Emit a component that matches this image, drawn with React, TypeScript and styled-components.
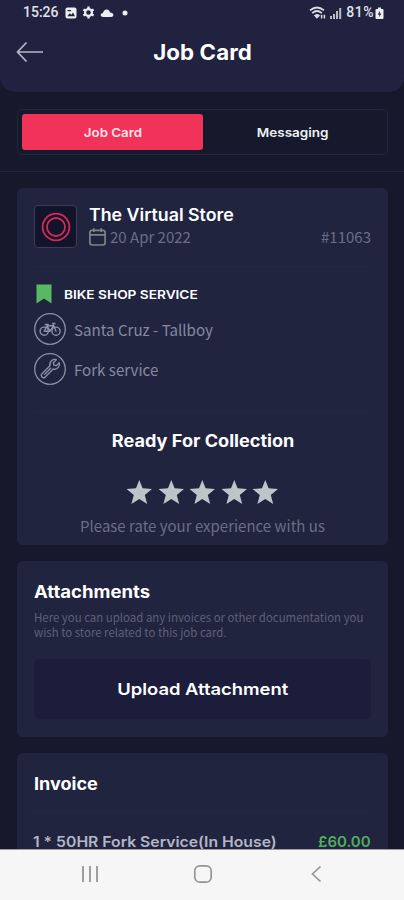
import React from "react";
import styled, { createGlobalStyle } from "styled-components";

const Global = createGlobalStyle`
  * { box-sizing: border-box; }
  html, body { margin: 0; padding: 0; overflow: hidden; background: #16192c; }
`;

const heading = `"Inter", "Liberation Sans", sans-serif`;
const body = `"Noto Sans CJK JP", "Noto Sans", sans-serif`;

const Screen = styled.div`
  width: 404px;
  height: 900px;
  display: flex;
  flex-direction: column;
  background: #16192c;
  overflow: hidden;
  font-family: ${body};
`;
const Header = styled.header`
  height: 92px;
  flex: none;
  background: #202240;
  border-radius: 0 0 15px 15px;
`;
const StatusBar = styled.div`
  height: 25px;
  display: flex;
  align-items: center;
  justify-content: space-between;
  padding: 0 20px 0 23px;
  font: 500 14px/25px Roboto, sans-serif;
  color: #e0e1ea;
`;
const StatusGroup = styled.div<{ $gap: number }>`
  display: flex;
  align-items: center;
  gap: ${(p) => p.$gap}px;
`;
const Clock = styled.span`
  width: 37px;
`;
const Battery = styled.span`
  display: flex;
  align-items: center;
  gap: 1px;
  margin-left: 1px;
  letter-spacing: 0.5px;
`;
const TitleBar = styled.div`
  height: 54px;
  display: grid;
  grid-template-columns: 60px 1fr 60px;
  align-items: center;
`;
const BackIcon = styled.svg`
  width: 28px;
  height: 22px;
  margin-left: 16px;
`;
const Label = styled.span<{
  $size: number;
  $track?: number;
  $color?: string;
  $weight?: number;
  $stretch?: number;
  $from?: "left" | "center" | "right";
}>`
  display: inline-block;
  font-family: ${heading};
  font-feature-settings: "calt" 0;
  font-size: ${(p) => p.$size}px;
  line-height: 1.2;
  font-weight: ${(p) => p.$weight ?? 700};
  letter-spacing: ${(p) => p.$track ?? 0}px;
  color: ${(p) => p.$color ?? "#ffffff"};
  white-space: nowrap;
  transform: scaleX(${(p) => p.$stretch ?? 1});
  transform-origin: ${(p) => p.$from ?? "left"} center;
`;
const Title = styled.h1`
  margin: 1px 0 0 2px;
  display: flex;
  justify-content: center;
  font-size: 20px;
`;
const TabSection = styled.div`
  flex: none;
  height: 80px;
  padding: 17px 16px 0 17px;
  border-bottom: 1px solid #20233a;
`;
const Tabs = styled.div`
  height: 46px;
  display: grid;
  grid-template-columns: 181px 1fr;
  padding: 4px;
  border: 1px solid #22263a;
  border-radius: 5px;
`;
const Tab = styled.button<{ $active?: boolean }>`
  border: 0;
  padding: 2px 0 0;
  border-radius: 3px;
  display: flex;
  align-items: center;
  justify-content: center;
  background: ${(p) => (p.$active ? "#f13259" : "transparent")};
`;
const Content = styled.main`
  flex: 1;
  min-height: 0;
  overflow: hidden;
  display: flex;
  flex-direction: column;
  gap: 16px;
  padding: 16px 16px 0 17px;
`;
const Card = styled.section<{ $height: number }>`
  flex: none;
  height: ${(p) => p.$height}px;
  padding: 0 17px;
  background: #20243f;
  border-radius: 6px;
  display: flex;
  flex-direction: column;
`;
const StoreRow = styled.div`
  height: 79px;
  display: flex;
  padding-top: 17px;
  border-bottom: 1px solid #22283f;
`;
const Logo = styled.div`
  width: 43px;
  height: 43px;
  border: 1px solid #3b3f55;
  border-radius: 4px;
  background: #11142a;
  display: flex;
  align-items: center;
  justify-content: center;
`;
const StoreInfo = styled.div`
  flex: 1;
  margin-left: 12px;
`;
const StoreName = styled.div`
  height: 21px;
  line-height: 18px;
`;
const MetaRow = styled.div`
  height: 22px;
  display: flex;
  align-items: center;
`;
const Muted = styled.span<{ $size: number; $color?: string }>`
  font-size: ${(p) => p.$size}px;
  line-height: 20px;
  color: ${(p) => p.$color ?? "#6a6e85"};
  white-space: nowrap;
`;
const DateText = styled(Muted)`
  flex: 1;
  margin-left: 4px;
`;
const ServiceHead = styled.div`
  height: 20px;
  margin: 17px 0 5px;
  display: flex;
  align-items: center;
  gap: 12px;
  padding-left: 2px;
`;
const ServiceName = styled.div`
  display: flex;
  padding-top: 2px;
`;
const Service = styled.div`
  height: 40px;
  display: flex;
  align-items: center;
  gap: 8px;
`;
const Status = styled.div`
  margin-top: 23px;
  border-top: 1px solid #22283f;
  display: flex;
  flex-direction: column;
  align-items: center;
`;
const Ready = styled.div`
  margin: 16px 0 0 1px;
  height: 24px;
  display: flex;
  align-items: center;
`;
const Stars = styled.div`
  display: flex;
  gap: 5px;
  margin-top: 25px;
  height: 28px;
`;
const Hint = styled.div`
  margin-top: 10px;
  height: 20px;
  display: flex;
`;
const CardTitle = styled.h2`
  margin: 19px 0 0;
  height: 24px;
  display: flex;
  align-items: center;
  font-size: 17px;
`;
const Description = styled.p`
  margin: 6px 0 0;
  font-size: 11.43px;
  line-height: 15px;
  color: #5d6179;
  white-space: nowrap;
`;
const UploadButton = styled.button`
  margin-top: 19px;
  padding: 2px 0 0;
  height: 60px;
  border: 0;
  border-radius: 6px;
  background: #1c1d3a;
  display: flex;
  align-items: center;
  justify-content: center;
`;
const InvoiceLine = styled.div`
  margin: 15px 0 0 -1px;
  padding-top: 22px;
  border-top: 1px solid #22283f;
  display: flex;
  justify-content: space-between;
`;
const NavBar = styled.nav`
  height: 51px;
  flex: none;
  background: #f6f6f6;
  border-top: 1px solid #9a9aa1;
  display: grid;
  grid-template-columns: 24px 24px 24px;
  column-gap: 89px;
  justify-content: start;
  align-items: center;
  padding: 0 0 2px 78px;
`;

const Star = () => (
  <svg width="26.6" height="28" viewBox="0 0 26.6 28">
    <path d="M13.3 2 L16.6 10.3 L26 11 L18.8 16.9 L21.2 26 L13.3 21 L5.4 26 L7.8 16.9 L.6 11 L10 10.3 Z" fill="#bcc6c8" />
  </svg>
);

const CircleIcon = ({ children }: { children: React.ReactNode }) => (
  <svg width="32" height="32" viewBox="0 0 32 32" fill="none" stroke="#8c90ad" strokeLinecap="round" strokeLinejoin="round">
    <circle cx="16" cy="16" r="15.3" strokeWidth="1.3" />
    {children}
  </svg>
);

export default function App() {
  return (
    <>
      <Global />
      <Screen>
        <Header>
          <StatusBar>
            <StatusGroup $gap={5}>
              <Clock>15:26</Clock>
              <svg width="12" height="12" viewBox="0 0 12 12">
                <rect x=".5" y=".5" width="11" height="11" rx="2" fill="#eeeff4" />
                <path d="M2.3 9.3 L4.7 6.3 L6.3 7.8 L8 5.5 L10 9.3 Z M2.5 3 H6 V4.2 H2.5Z" fill="#202240" />
              </svg>
              <svg width="13" height="13" viewBox="0 0 14 14">
                <circle cx="7" cy="7" r="3.7" fill="none" stroke="#eeeff4" strokeWidth="2.4" />
                <path d="M7 .6V3M7 11V13.4M1.5 3.8L3.4 4.9M10.6 9.1L12.5 10.2M1.5 10.2L3.4 9.1M10.6 4.9L12.5 3.8" stroke="#eeeff4" strokeWidth="2.5" />
              </svg>
              <svg width="14" height="10" viewBox="0 0 14 10">
                <path d="M3 9 Q.4 8.8 .6 6.8 Q1 5 3 5 Q3.7 1.4 6.8 1.4 Q9.5 1.6 10 4.5 Q13.2 4.8 13.4 7 Q13.4 9 11.2 9Z" fill="#eeeff4" />
              </svg>
              <svg width="12" height="6" viewBox="0 0 12 6">
                <circle cx="6" cy="3" r="2.5" fill="#eeeff4" />
              </svg>
            </StatusGroup>
            <StatusGroup $gap={3}>
              <svg width="18" height="14" viewBox="0 0 18 14" fill="none" stroke="#d9dbe4">
                <path d="M1 4.4 Q8 -1.5 15 4.4" strokeWidth="1.8" />
                <path d="M3.2 7.1 Q8 3 12.8 7.1" strokeWidth="1.8" />
                <path d="M5.3 9.5 Q8 7.4 10.7 9.5 L8 12.2Z" fill="#d9dbe4" />
                <path d="M12.6 12.6V8.8M15.4 8.8V12.6" strokeWidth="1.5" />
              </svg>
              <svg width="12" height="12" viewBox="0 0 12 12" fill="#b9bbc9">
                <path d="M0 9h2v3H0zM3 7h2v5H3zM6 4h2v8H6zM9.2 1h2v11h-2z" />
              </svg>
              <Battery>
                <span>81%</span>
                <svg width="9" height="12" viewBox="0 0 9 12">
                  <path d="M3 .5H6V2H7.4Q8.5 2 8.5 3V11Q8.5 12 7.4 12H1.6Q.5 12 .5 11V3Q.5 2 1.6 2H3Z" fill="#eeeff4" />
                  <path d="M5 3.7L2.7 7.4H4.3L4 10.3L6.4 6.5H4.8Z" fill="#202240" />
                </svg>
              </Battery>
            </StatusGroup>
          </StatusBar>
          <TitleBar>
            <BackIcon viewBox="0 0 28 22" fill="none" stroke="#b7b9c5" strokeWidth="1.7">
              <path d="M27 11H1.5M10.5 1.5L1.5 11L10.5 20.5" />
            </BackIcon>
            <Title>
              <Label $size={21} $track={0.1} $stretch={1.06} $from="center">Job Card</Label>
            </Title>
          </TitleBar>
        </Header>
        <TabSection>
          <Tabs>
            <Tab $active>
              <Label $size={12.3} $stretch={1.08} $from="center" $weight={600} $color="#ffe3ea">Job Card</Label>
            </Tab>
            <Tab>
              <Label $size={12.3} $stretch={1.1} $from="center" $weight={600} $color="#f0f1f6">Messaging</Label>
            </Tab>
          </Tabs>
        </TabSection>
        <Content>
          <Card $height={357}>
            <StoreRow>
              <Logo>
                <svg width="30" height="30" viewBox="0 0 30 30" fill="none" stroke="#d42c55" strokeWidth="1.8">
                  <circle cx="15" cy="15" r="13.4" />
                  <circle cx="15" cy="15" r="9" />
                </svg>
              </Logo>
              <StoreInfo>
                <StoreName>
                  <Label $size={16.7} $stretch={1.065} $weight={600}>The Virtual Store</Label>
                </StoreName>
                <MetaRow>
                  <svg width="17" height="18" viewBox="0 0 17 18" fill="none" stroke="#7c8389" strokeWidth="1.7">
                    <rect x=".9" y="2.4" width="15.2" height="14.6" rx="2.2" />
                    <path d="M1 6.8H16M4.8 .3V4M12.2 .3V4" />
                  </svg>
                  <DateText $size={15}>20 Apr 2022</DateText>
                  <Muted $size={15}>#11063</Muted>
                </MetaRow>
              </StoreInfo>
            </StoreRow>
            <ServiceHead>
              <svg width="16" height="20" viewBox="0 0 16 20">
                <path d="M.5 .5H15.5V19.5L8 14.5L.5 19.5Z" fill="#58b961" />
              </svg>
              <ServiceName>
                <Label $size={12.3} $stretch={1.11} $weight={600}>BIKE SHOP SERVICE</Label>
              </ServiceName>
            </ServiceHead>
            <Service>
              <CircleIcon>
                <g strokeWidth="1.4">
                  <circle cx="10.2" cy="18.2" r="4.1" />
                  <circle cx="22" cy="18.2" r="4.1" />
                  <path d="M10.2 18.2L13 12.8H19.5L16 18.2H10.3M13 12.8L16 18.2M22 18.2L18.8 10.5H21M11.3 11.5H14.2" />
                </g>
              </CircleIcon>
              <Muted $size={15.1} $color="#858aa2">Santa Cruz - Tallboy</Muted>
            </Service>
            <Service>
              <CircleIcon>
                <g transform="rotate(45 16 16)" strokeWidth="1.3">
                  <path d="M13.7 13.8 Q11 12.2 11.2 9 Q11.4 6.2 13.9 5 V9.2 L16 10.5 L18.1 9.2 V5 Q20.6 6.2 20.8 9 Q21 12.2 18.3 13.8 V25 Q18.3 27.2 16 27.2 Q13.7 27.2 13.7 25Z" />
                  <path d="M16 15V23.5" />
                </g>
              </CircleIcon>
              <Muted $size={15.1} $color="#858aa2">Fork service</Muted>
            </Service>
            <Status>
              <Ready>
                <Label $size={16.7} $stretch={1.085} $from="center">Ready For Collection</Label>
              </Ready>
              <Stars>
                {[0, 1, 2, 3, 4].map((n) => (
                  <Star key={n} />
                ))}
              </Stars>
              <Hint>
                <Muted $size={15}>Please rate your experience with us</Muted>
              </Hint>
            </Status>
          </Card>
          <Card $height={176}>
            <CardTitle>
              <Label $size={16.7} $stretch={1.11}>Attachments</Label>
            </CardTitle>
            <Description>
              Here you can upload any invoices or other documentation you
              <br />
              wish to store related to this job card.
            </Description>
            <UploadButton>
              <Label $size={16.5} $stretch={1.115} $from="center" $weight={600}>Upload Attachment</Label>
            </UploadButton>
          </Card>
          <Card $height={176}>
            <CardTitle>
              <Label $size={16.7} $stretch={1.08}>Invoice</Label>
            </CardTitle>
            <InvoiceLine>
              <Label $size={14.7} $stretch={1.072} $weight={600} $color="#b4b6c8">1 * 50HR Fork Service(In House)</Label>
              <Label $size={14.7} $stretch={1.02} $from="right" $weight={600} $color="#53ad5e">£60.00</Label>
            </InvoiceLine>
          </Card>
        </Content>
        <NavBar>
          <svg width="24" height="24" viewBox="0 0 24 24" stroke="#959595" strokeWidth="1.8">
            <path d="M5 4V20M12 4V20M19 4V20" />
          </svg>
          <svg width="24" height="24" viewBox="0 0 24 24" fill="none" stroke="#959595" strokeWidth="1.7">
            <rect x="3.8" y="3.8" width="16.4" height="16.4" rx="5" />
          </svg>
          <svg width="24" height="24" viewBox="0 0 24 24" fill="none" stroke="#959595" strokeWidth="1.7">
            <path d="M16.5 4.5L8.5 12L16.5 19.5" />
          </svg>
        </NavBar>
      </Screen>
    </>
  );
}
